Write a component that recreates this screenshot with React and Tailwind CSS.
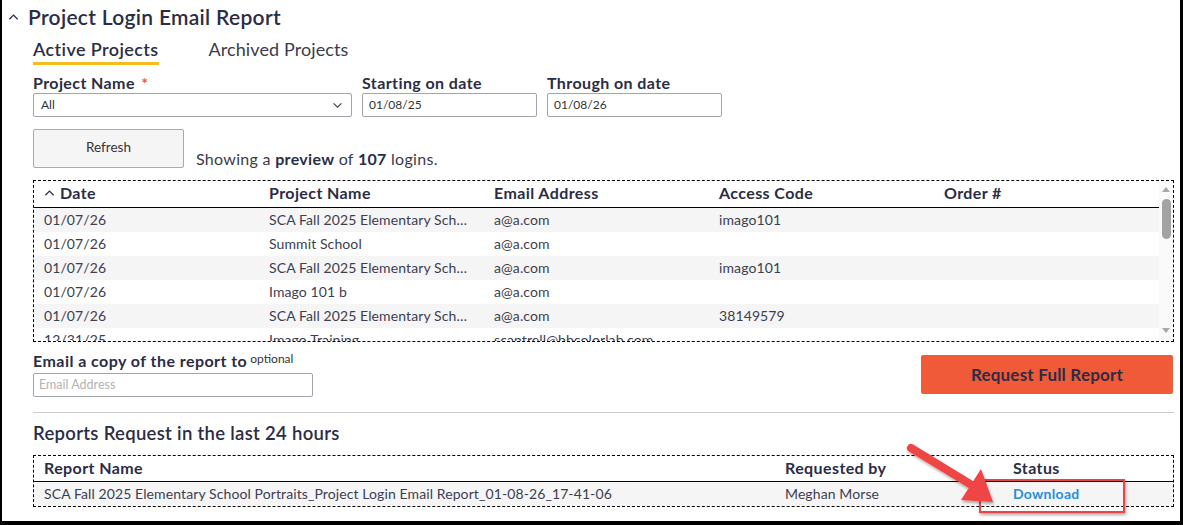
import React from "react";

const rows = [
  ["01/07/26", "SCA Fall 2025 Elementary Sch…", "a@a.com", "imago101", ""],
  ["01/07/26", "Summit School", "a@a.com", "", ""],
  ["01/07/26", "SCA Fall 2025 Elementary Sch…", "a@a.com", "imago101", ""],
  ["01/07/26", "Imago 101 b", "a@a.com", "", ""],
  ["01/07/26", "SCA Fall 2025 Elementary Sch…", "a@a.com", "38149579", ""],
  ["12/31/25", "Imago Training", "scantrell@bbcolorlab.com", "", ""],
];

function ChevronUp({ className }) {
  return (
    <svg className={className} viewBox="0 0 12 8" fill="none" stroke="currentColor" strokeWidth="1.4">
      <path d="M1.5 6.5 L6 2 L10.5 6.5" />
    </svg>
  );
}

function ChevronDown({ className }) {
  return (
    <svg className={className} viewBox="0 0 12 8" fill="none" stroke="currentColor" strokeWidth="1.3">
      <path d="M1.5 1.5 L6 6 L10.5 1.5" />
    </svg>
  );
}

export default function App() {
  return (
    <div className="relative w-[1183px] h-[525px] overflow-hidden bg-white border-l-2 border-r-[3px] border-b-4 border-black font-['Lato',sans-serif] text-[#2b2d45]">
      {/* Title */}
      <div className="flex items-center h-[34px] pl-[6px]">
        <ChevronUp className="w-[11px] h-[8px] text-[#2b2d45]" />
        <h1 className="ml-[9px] text-[21px] tracking-[0.3px] font-semibold leading-[24px]">Project Login Email Report</h1>
      </div>

      <div className="pl-[31px] pr-[7px]">
        {/* Tabs */}
        <div className="flex mt-[4px] gap-[50px]">
          <div className="text-[18px] tracking-[0.4px] font-semibold leading-[22px] pb-[2px] border-b-[3px] border-[#f5bd1f]">Active Projects</div>
          <div className="text-[18px] tracking-[0.1px] leading-[22px] text-[#3a3b4d]">Archived Projects</div>
        </div>

        {/* Filters */}
        <div className="flex mt-[8px] gap-[10px]">
          <div className="flex flex-col">
            <div className="text-[16px] tracking-[0.4px] font-bold leading-[20px]">
              Project Name <span className="text-[#f15a3a] ml-[2px]">*</span>
            </div>
            <div className="flex items-center justify-between w-[319px] h-[24px] border border-[#a3a3ad] rounded-[2px] pl-[7px] pr-[8px] text-[12px] text-[#333]">
              <span>All</span>
              <ChevronDown className="w-[11px] h-[7px] text-[#444]" />
            </div>
          </div>
          <div className="flex flex-col">
            <div className="text-[16px] tracking-[0.4px] font-bold leading-[20px]">Starting on date</div>
            <div className="flex items-center w-[175px] h-[24px] border border-[#a3a3ad] rounded-[2px] pl-[6px] text-[12px] text-[#333]">01/08/25</div>
          </div>
          <div className="flex flex-col">
            <div className="text-[16px] tracking-[0.4px] font-bold leading-[20px]">Through on date</div>
            <div className="flex items-center w-[175px] h-[24px] border border-[#a3a3ad] rounded-[2px] pl-[6px] text-[12px] text-[#333]">01/08/26</div>
          </div>
        </div>

        {/* Refresh */}
        <div className="flex items-end mt-[12px] gap-[12px]">
          <button className="w-[151px] h-[39px] bg-[#f5f5f5] border border-[#a9a9b3] rounded-[2px] text-[13.5px] text-[#333] pb-[2px]">Refresh</button>
          <div className="text-[16px] tracking-[0.3px] leading-[20px] mb-[-1px] text-[#3a3b4d]">
            Showing a <span className="font-bold text-[#2b2d45]">preview</span> of <span className="font-bold text-[#2b2d45]">107</span> logins.
          </div>
        </div>

        {/* Table */}
        <div className="mt-[12px] w-[1141px] h-[162px] border border-dashed border-black flex overflow-hidden">
          <div className="flex-1 flex flex-col overflow-hidden">
            <div className="flex h-[27px] items-center border-b border-black text-[16px] tracking-[0.4px] font-bold shrink-0 pb-[2px]">
              <div className="w-[235px] pl-[10px] flex items-center">
                <ChevronUp className="w-[11px] h-[8px] mr-[5px]" />
                Date
              </div>
              <div className="w-[225px]">Project Name</div>
              <div className="w-[225px]">Email Address</div>
              <div className="w-[225px]">Access Code</div>
              <div className="flex-1">Order #</div>
            </div>
            {rows.map((r, i) => (
              <div key={i} className={`flex h-[24px] shrink-0 items-center pb-[2px] text-[14px] tracking-[0.1px] text-[#3c3e52] ${i % 2 === 0 ? "bg-[#f5f5f5]" : "bg-white"}`}>
                <div className="w-[235px] pl-[10px]">{r[0]}</div>
                <div className="w-[225px] whitespace-nowrap">{r[1]}</div>
                <div className="w-[225px] whitespace-nowrap">{r[2]}</div>
                <div className="w-[225px]">{r[3]}</div>
                <div className="flex-1">{r[4]}</div>
              </div>
            ))}
          </div>
          <div className="w-[14px] bg-[#fafafa] flex flex-col items-center shrink-0">
            <svg className="w-[8px] h-[5px] mt-[6px]" viewBox="0 0 8 5"><path d="M0 5 L4 0 L8 5 Z" fill="#a8a8a8" /></svg>
            <div className="w-[9px] h-[40px] mt-[7px] rounded-full bg-[#a3a3a3]" />
            <div className="flex-1" />
            <svg className="w-[8px] h-[5px] mb-[8px]" viewBox="0 0 8 5"><path d="M0 0 L4 5 L8 0 Z" fill="#a8a8a8" /></svg>
          </div>
        </div>

        {/* Email + Request */}
        <div className="flex justify-between">
          <div className="flex flex-col mt-[9px]">
            <div className="flex items-start leading-[20px]">
              <span className="text-[16px] tracking-[0.45px] font-bold">Email a copy of the report to</span>
              <span className="text-[12px] ml-[3px] leading-[16px] text-[#333]">optional</span>
            </div>
            <div className="mt-[2px] w-[280px] h-[24px] border border-[#a3a3ad] rounded-[2px] flex items-center pl-[5px] text-[12.5px] text-[#b3b3b3]">Email Address</div>
          </div>
          <button className="mt-[13px] w-[252px] h-[39px] bg-[#f15a38] rounded-[2px] text-[17px] tracking-[0.2px] font-bold text-[#2b2d45]">Request Full Report</button>
        </div>

        {/* Divider */}
        <div className="mt-[15px] w-[1141px] border-t border-[#cccccc]" />

        {/* Reports */}
        <div className="mt-[8px] text-[18.5px] tracking-[0.3px] font-semibold leading-[24px]">Reports Request in the last 24 hours</div>
        <div className="mt-[10px] w-[1141px] border border-dashed border-black">
          <div className="flex h-[26px] items-center border-b border-black text-[16px] tracking-[0.4px] font-bold pb-[2px]">
            <div className="w-[751px] pl-[10px]">Report Name</div>
            <div className="w-[228px]">Requested by</div>
            <div className="flex-1">Status</div>
          </div>
          <div className="flex h-[24px] items-center pb-[2px] bg-[#f5f5f5] text-[14px] tracking-[0.1px] text-[#3c3e52]">
            <div className="w-[751px] pl-[10px] whitespace-nowrap">SCA Fall 2025 Elementary School Portraits_Project Login Email Report_01-08-26_17-41-06</div>
            <div className="w-[228px]">Meghan Morse</div>
            <div className="flex-1 font-bold tracking-[0.3px] text-[#1e8fe1]">Download</div>
          </div>
        </div>
      </div>

      {/* Annotation: red box */}
      <div className="absolute left-[977px] top-[479px] w-[146px] h-[34px] border-2 border-[#ec4344] shadow-[1px_2px_3px_rgba(0,0,0,0.35)]" />
      {/* Annotation: arrow */}
      <svg className="absolute left-0 top-0 pointer-events-none" width="1183" height="525" viewBox="0 0 1183 525">
        <defs>
          <filter id="sh" x="-20%" y="-20%" width="140%" height="140%">
            <feDropShadow dx="1" dy="2" stdDeviation="1.5" floodColor="#000" floodOpacity="0.35" />
          </filter>
        </defs>
        <g filter="url(#sh)">
          <line x1="909" y1="448" x2="968" y2="484" stroke="#ef4444" strokeWidth="8" strokeLinecap="round" />
          <path d="M991 502 L959 500 L979 469 Z" fill="#ef4444" />
        </g>
      </svg>
    </div>
  );
}
